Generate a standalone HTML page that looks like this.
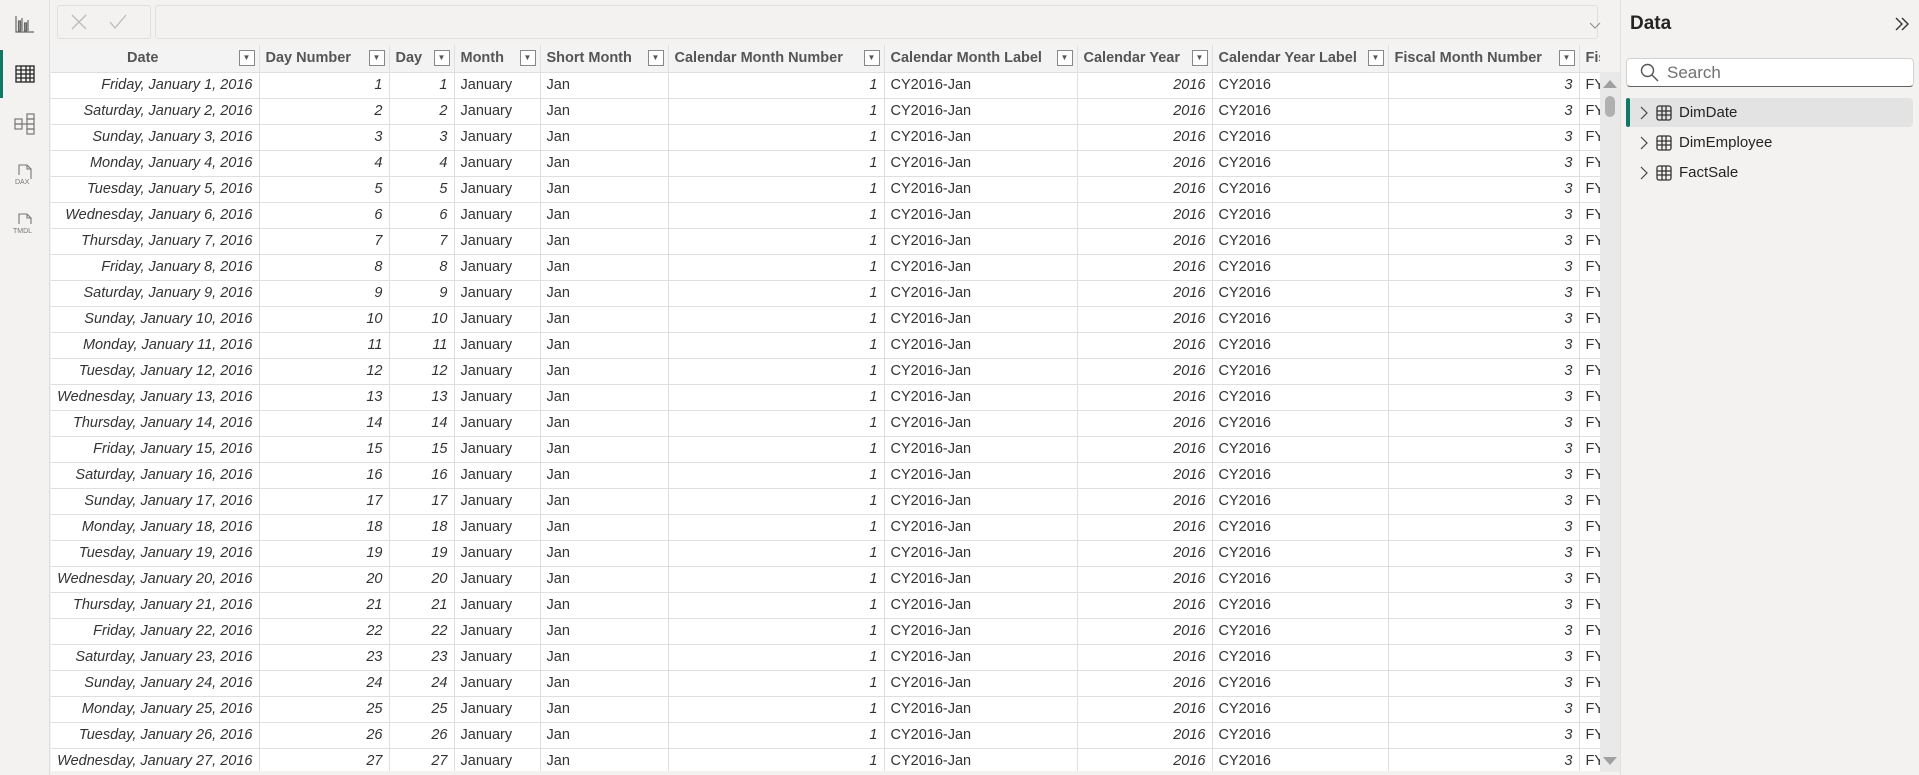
<!DOCTYPE html>
<html><head><meta charset="utf-8"><style>
*{box-sizing:border-box;margin:0;padding:0}
body{width:1919px;height:775px;overflow:hidden;background:#f3f2f1;font-family:"Liberation Sans",sans-serif;position:relative;color:#252423}
.abs{position:absolute}
#side{left:0;top:0;width:50px;height:775px;background:#f3f2f1;border-right:1px solid #e1dfdd}
#grid{left:51px;top:45px;width:1549px;height:726px;overflow:hidden;background:#fff}
table{border-collapse:collapse;table-layout:fixed;font-size:14.5px;width:1568px}
th{height:27px;background:#f3f3f3;font-weight:bold;color:#555;text-align:left;padding:0 4px 0 6px;border-right:1px solid #e1dfdd;border-bottom:1px solid #e1dfdd;white-space:nowrap;overflow:hidden;position:relative}
th .f{position:absolute;right:4px;top:5px;width:16px;height:16px;border:1px solid #8a8886;background:#fff;font-size:8px;line-height:14px;text-align:center;color:#555}
td{height:26px;border-right:1px solid #e1dfdd;border-bottom:1px solid #e1dfdd;padding:0 6px;white-space:nowrap;overflow:hidden;color:#333}
td.r{text-align:right;font-style:italic}
#sb{left:1600px;top:72px;width:20px;height:700px;background:#e9e9e9}
</style></head><body>
<div id="side" class="abs">
<svg class="abs" style="left:15px;top:15px" width="20" height="18" viewBox="0 0 20 18" fill="none" stroke="#666" stroke-width="1.2"><path d="M1 1v16h18M4 6v10M7 3v13M10 8v8M13 5v11"/><rect x="3.5" y="6" width="2" height="10"/><rect x="9.5" y="8" width="2" height="8"/></svg>
<div class="abs" style="left:0;top:50px;width:3px;height:48px;background:#117865"></div>
<svg class="abs" style="left:15px;top:65px" width="20" height="18" viewBox="0 0 20 18" fill="none" stroke="#222" stroke-width="1.3"><rect x="1" y="1" width="18" height="16"/><path d="M1 5h18M1 9h18M1 13h18M6 1v16M11 1v16M15 1v16"/></svg>
<svg class="abs" style="left:14px;top:113px" width="22" height="22" viewBox="0 0 22 22" fill="none" stroke="#777" stroke-width="1.2"><rect x="1" y="6" width="7" height="5"/><rect x="1" y="11" width="7" height="5"/><rect x="13" y="1" width="7" height="5"/><rect x="13" y="6" width="7" height="5"/><rect x="13" y="11" width="7" height="5"/><rect x="13" y="16" width="7" height="5"/><path d="M8 11h5"/></svg>
<svg class="abs" style="left:14px;top:163px" width="22" height="24" viewBox="0 0 22 24" fill="none" stroke="#777" stroke-width="1.1"><path d="M5 12V2h8l4 4v10"/><path d="M13 2v4h4"/><text x="1" y="21" font-size="7" fill="#777" stroke="none" font-family="Liberation Sans">DAX</text></svg>
<svg class="abs" style="left:12px;top:212px" width="26" height="24" viewBox="0 0 26 24" fill="none" stroke="#777" stroke-width="1.1"><path d="M7 12V2h8l4 4v6"/><path d="M15 2v4h4"/><text x="1" y="21" font-size="7" fill="#777" stroke="none" font-family="Liberation Sans">TMDL</text></svg>
</div>
<div class="abs" style="left:57px;top:5px;width:94px;height:34px;border:1px solid #e1dfdd;border-radius:3px;background:#f3f2f1"></div>
<svg class="abs" style="left:70px;top:13px" width="70" height="18" viewBox="0 0 70 18" fill="none" stroke="#bbb" stroke-width="1.3"><path d="M2 2l14 14M16 2L2 16M40 9l5 6 11-13"/></svg>
<div class="abs" style="left:155px;top:5px;width:1443px;height:34px;border:1px solid #e1dfdd;border-radius:3px;background:#f3f2f1"></div>
<svg class="abs" style="left:1589px;top:22px" width="12" height="8" viewBox="0 0 12 8" fill="none" stroke="#888"><path d="M1 1l5 5 5-5"/></svg>
<div id="grid" class="abs"><table>
<colgroup><col style="width:208px"><col style="width:130px"><col style="width:65px"><col style="width:86px"><col style="width:128px"><col style="width:216px"><col style="width:193px"><col style="width:135px"><col style="width:176px"><col style="width:191px"><col style="width:40px"></colgroup>
<tr><th style="text-align:center;padding-right:30px">Date<span class="f">▼</span></th><th>Day Number<span class="f">▼</span></th><th>Day<span class="f">▼</span></th><th>Month<span class="f">▼</span></th><th>Short Month<span class="f">▼</span></th><th>Calendar Month Number<span class="f">▼</span></th><th>Calendar Month Label<span class="f">▼</span></th><th>Calendar Year<span class="f">▼</span></th><th>Calendar Year Label<span class="f">▼</span></th><th>Fiscal Month Number<span class="f">▼</span></th><th>Fiscal</th></tr>
<tr><td class="r">Friday, January 1, 2016</td><td class="r">1</td><td class="r">1</td><td>January</td><td>Jan</td><td class="r">1</td><td>CY2016-Jan</td><td class="r">2016</td><td>CY2016</td><td class="r">3</td><td>FY</td></tr>
<tr><td class="r">Saturday, January 2, 2016</td><td class="r">2</td><td class="r">2</td><td>January</td><td>Jan</td><td class="r">1</td><td>CY2016-Jan</td><td class="r">2016</td><td>CY2016</td><td class="r">3</td><td>FY</td></tr>
<tr><td class="r">Sunday, January 3, 2016</td><td class="r">3</td><td class="r">3</td><td>January</td><td>Jan</td><td class="r">1</td><td>CY2016-Jan</td><td class="r">2016</td><td>CY2016</td><td class="r">3</td><td>FY</td></tr>
<tr><td class="r">Monday, January 4, 2016</td><td class="r">4</td><td class="r">4</td><td>January</td><td>Jan</td><td class="r">1</td><td>CY2016-Jan</td><td class="r">2016</td><td>CY2016</td><td class="r">3</td><td>FY</td></tr>
<tr><td class="r">Tuesday, January 5, 2016</td><td class="r">5</td><td class="r">5</td><td>January</td><td>Jan</td><td class="r">1</td><td>CY2016-Jan</td><td class="r">2016</td><td>CY2016</td><td class="r">3</td><td>FY</td></tr>
<tr><td class="r">Wednesday, January 6, 2016</td><td class="r">6</td><td class="r">6</td><td>January</td><td>Jan</td><td class="r">1</td><td>CY2016-Jan</td><td class="r">2016</td><td>CY2016</td><td class="r">3</td><td>FY</td></tr>
<tr><td class="r">Thursday, January 7, 2016</td><td class="r">7</td><td class="r">7</td><td>January</td><td>Jan</td><td class="r">1</td><td>CY2016-Jan</td><td class="r">2016</td><td>CY2016</td><td class="r">3</td><td>FY</td></tr>
<tr><td class="r">Friday, January 8, 2016</td><td class="r">8</td><td class="r">8</td><td>January</td><td>Jan</td><td class="r">1</td><td>CY2016-Jan</td><td class="r">2016</td><td>CY2016</td><td class="r">3</td><td>FY</td></tr>
<tr><td class="r">Saturday, January 9, 2016</td><td class="r">9</td><td class="r">9</td><td>January</td><td>Jan</td><td class="r">1</td><td>CY2016-Jan</td><td class="r">2016</td><td>CY2016</td><td class="r">3</td><td>FY</td></tr>
<tr><td class="r">Sunday, January 10, 2016</td><td class="r">10</td><td class="r">10</td><td>January</td><td>Jan</td><td class="r">1</td><td>CY2016-Jan</td><td class="r">2016</td><td>CY2016</td><td class="r">3</td><td>FY</td></tr>
<tr><td class="r">Monday, January 11, 2016</td><td class="r">11</td><td class="r">11</td><td>January</td><td>Jan</td><td class="r">1</td><td>CY2016-Jan</td><td class="r">2016</td><td>CY2016</td><td class="r">3</td><td>FY</td></tr>
<tr><td class="r">Tuesday, January 12, 2016</td><td class="r">12</td><td class="r">12</td><td>January</td><td>Jan</td><td class="r">1</td><td>CY2016-Jan</td><td class="r">2016</td><td>CY2016</td><td class="r">3</td><td>FY</td></tr>
<tr><td class="r">Wednesday, January 13, 2016</td><td class="r">13</td><td class="r">13</td><td>January</td><td>Jan</td><td class="r">1</td><td>CY2016-Jan</td><td class="r">2016</td><td>CY2016</td><td class="r">3</td><td>FY</td></tr>
<tr><td class="r">Thursday, January 14, 2016</td><td class="r">14</td><td class="r">14</td><td>January</td><td>Jan</td><td class="r">1</td><td>CY2016-Jan</td><td class="r">2016</td><td>CY2016</td><td class="r">3</td><td>FY</td></tr>
<tr><td class="r">Friday, January 15, 2016</td><td class="r">15</td><td class="r">15</td><td>January</td><td>Jan</td><td class="r">1</td><td>CY2016-Jan</td><td class="r">2016</td><td>CY2016</td><td class="r">3</td><td>FY</td></tr>
<tr><td class="r">Saturday, January 16, 2016</td><td class="r">16</td><td class="r">16</td><td>January</td><td>Jan</td><td class="r">1</td><td>CY2016-Jan</td><td class="r">2016</td><td>CY2016</td><td class="r">3</td><td>FY</td></tr>
<tr><td class="r">Sunday, January 17, 2016</td><td class="r">17</td><td class="r">17</td><td>January</td><td>Jan</td><td class="r">1</td><td>CY2016-Jan</td><td class="r">2016</td><td>CY2016</td><td class="r">3</td><td>FY</td></tr>
<tr><td class="r">Monday, January 18, 2016</td><td class="r">18</td><td class="r">18</td><td>January</td><td>Jan</td><td class="r">1</td><td>CY2016-Jan</td><td class="r">2016</td><td>CY2016</td><td class="r">3</td><td>FY</td></tr>
<tr><td class="r">Tuesday, January 19, 2016</td><td class="r">19</td><td class="r">19</td><td>January</td><td>Jan</td><td class="r">1</td><td>CY2016-Jan</td><td class="r">2016</td><td>CY2016</td><td class="r">3</td><td>FY</td></tr>
<tr><td class="r">Wednesday, January 20, 2016</td><td class="r">20</td><td class="r">20</td><td>January</td><td>Jan</td><td class="r">1</td><td>CY2016-Jan</td><td class="r">2016</td><td>CY2016</td><td class="r">3</td><td>FY</td></tr>
<tr><td class="r">Thursday, January 21, 2016</td><td class="r">21</td><td class="r">21</td><td>January</td><td>Jan</td><td class="r">1</td><td>CY2016-Jan</td><td class="r">2016</td><td>CY2016</td><td class="r">3</td><td>FY</td></tr>
<tr><td class="r">Friday, January 22, 2016</td><td class="r">22</td><td class="r">22</td><td>January</td><td>Jan</td><td class="r">1</td><td>CY2016-Jan</td><td class="r">2016</td><td>CY2016</td><td class="r">3</td><td>FY</td></tr>
<tr><td class="r">Saturday, January 23, 2016</td><td class="r">23</td><td class="r">23</td><td>January</td><td>Jan</td><td class="r">1</td><td>CY2016-Jan</td><td class="r">2016</td><td>CY2016</td><td class="r">3</td><td>FY</td></tr>
<tr><td class="r">Sunday, January 24, 2016</td><td class="r">24</td><td class="r">24</td><td>January</td><td>Jan</td><td class="r">1</td><td>CY2016-Jan</td><td class="r">2016</td><td>CY2016</td><td class="r">3</td><td>FY</td></tr>
<tr><td class="r">Monday, January 25, 2016</td><td class="r">25</td><td class="r">25</td><td>January</td><td>Jan</td><td class="r">1</td><td>CY2016-Jan</td><td class="r">2016</td><td>CY2016</td><td class="r">3</td><td>FY</td></tr>
<tr><td class="r">Tuesday, January 26, 2016</td><td class="r">26</td><td class="r">26</td><td>January</td><td>Jan</td><td class="r">1</td><td>CY2016-Jan</td><td class="r">2016</td><td>CY2016</td><td class="r">3</td><td>FY</td></tr>
<tr><td class="r">Wednesday, January 27, 2016</td><td class="r">27</td><td class="r">27</td><td>January</td><td>Jan</td><td class="r">1</td><td>CY2016-Jan</td><td class="r">2016</td><td>CY2016</td><td class="r">3</td><td>FY</td></tr>
</table></div>
<div id="sb" class="abs"></div>
<div class="abs" style="left:1603px;top:80px;width:0;height:0;border-left:7px solid transparent;border-right:7px solid transparent;border-bottom:8px solid #a0a0a0"></div>
<div class="abs" style="left:1605px;top:96px;width:10px;height:21px;border-radius:5px;background:#b0b0b0"></div>
<div class="abs" style="left:1603px;top:757px;width:0;height:0;border-left:7px solid transparent;border-right:7px solid transparent;border-top:8px solid #a0a0a0"></div>
<div class="abs" style="left:1620px;top:0;width:1px;height:775px;background:#e1dfdd"></div>
<div class="abs" style="left:1630px;top:13px;font-size:19px;font-weight:bold;color:#252423">Data</div>
<svg class="abs" style="left:1894px;top:16px" width="16" height="16" viewBox="0 0 16 16" fill="none" stroke="#333" stroke-width="1.4"><path d="M2 2l6 6-6 6M8 2l6 6-6 6"/></svg>
<div class="abs" style="left:1626px;top:58px;width:288px;height:29px;background:#fff;border:1px solid #d1d1d1;border-bottom:1px solid #616161;border-radius:4px"></div>
<svg class="abs" style="left:1640px;top:63px" width="19" height="19" viewBox="0 0 19 19" fill="none" stroke="#555" stroke-width="1.4"><circle cx="7.5" cy="7.5" r="6"/><path d="M12 12l6 6"/></svg>
<div class="abs" style="left:1667px;top:63px;font-size:17px;color:#707070">Search</div>
<div class="abs" style="left:1626px;top:98px;width:287px;height:29px;background:#e3e3e3;border-radius:4px"></div>
<div class="abs" style="left:1626px;top:98px;width:4px;height:29px;background:#117865;border-radius:2px"></div>
<svg class="abs" style="left:1639px;top:106px" width="10" height="74" viewBox="0 0 10 74" fill="none" stroke="#444" stroke-width="1.2"><path d="M2 1l6 6-6 6M2 31l6 6-6 6M2 61l6 6-6 6"/></svg>
<svg class="abs" style="left:1656px;top:105px" width="16" height="76" viewBox="0 0 16 76" fill="none" stroke="#333" stroke-width="1.3"><rect x="1" y="1" width="14" height="14" rx="2"/><path d="M1 6h14M1 10h14M6 1v14M10 1v14"/><rect x="1" y="31" width="14" height="14" rx="2"/><path d="M1 36h14M1 40h14M6 31v14M10 31v14"/><rect x="1" y="61" width="14" height="14" rx="2"/><path d="M1 66h14M1 70h14M6 61v14M10 61v14"/></svg>
<div class="abs" style="left:1679px;top:104px;font-size:15px;line-height:18px">DimDate</div>
<div class="abs" style="left:1679px;top:134px;font-size:15px;line-height:18px">DimEmployee</div>
<div class="abs" style="left:1679px;top:164px;font-size:15px;line-height:18px">FactSale</div>
</body></html>
